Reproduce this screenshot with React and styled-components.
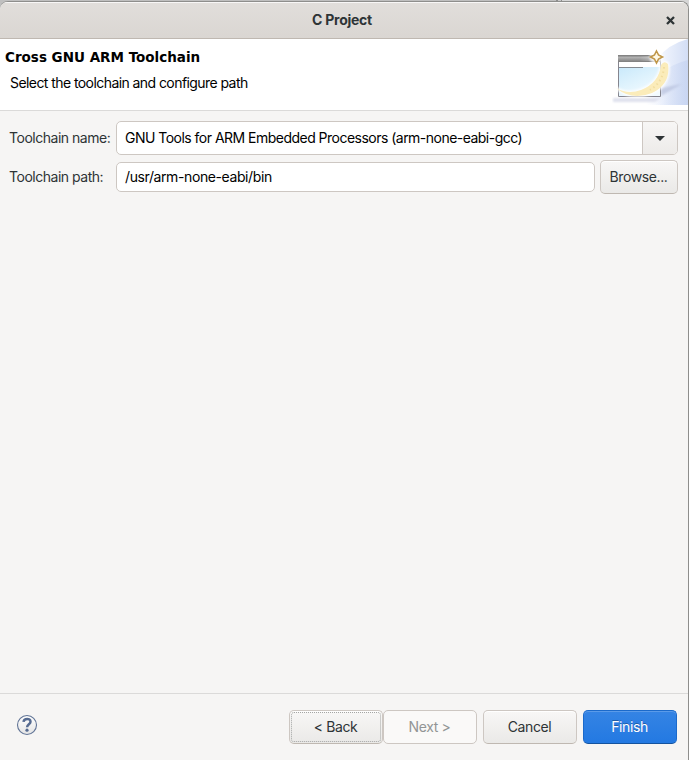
import React from "react";
import styled, { createGlobalStyle } from "styled-components";

const GlobalStyle = createGlobalStyle`
  * { box-sizing: border-box; }
  body { margin: 0; background: #c8c8c8; }
`;

const Desktop = styled.div`
  width: 689px;
  height: 760px;
  overflow: hidden;
  padding-top: 1px;
  background: linear-gradient(90deg, #bfbfbf 556px, #8d8d8d 556px 558px, #c9c9c9 558px 561px, #8d8d8d 561px 562px, #d6d6d6 562px);
  font-family: Inter, "Liberation Sans", sans-serif;
  font-size: 14px;
  line-height: 20px;
  letter-spacing: -0.48px;
  color: #2e3436;
`;

const Window = styled.div`
  height: 759px;
  display: flex;
  flex-direction: column;
  border-top: 1px solid #8e8e8c;
  border-right: 1px solid #8e8e8c;
  border-radius: 8px 8px 0 0;
  background: #f6f5f4;
  overflow: hidden;
`;

const TitleBar = styled.header`
  height: 37px;
  flex: none;
  display: grid;
  grid-template-columns: 36px 1fr 36px;
  align-items: center;
  justify-items: center;
  background: linear-gradient(#e1dedb, #dad6d2);
  border-bottom: 1px solid #bfb8b1;
  box-shadow: inset 0 1px #f8f7f7;
`;

const WindowTitle = styled.h1`
  grid-column: 2;
  margin: 0 0 0 -4px;
  font-size: 14px;
  font-weight: 700;
  letter-spacing: -0.25px;
`;

const CloseButton = styled.button`
  display: flex;
  padding: 0;
  border: 0;
  background: none;
`;

const Banner = styled.section`
  height: 72px;
  flex: none;
  display: flex;
  justify-content: space-between;
  background: #fff;
  border-bottom: 1px solid #dbdad9;
  color: #000;
`;

const BannerText = styled.div`
  padding: 8px 0 0 5px;
`;

const Heading = styled.h2`
  margin: 0 0 6px;
  font: 700 13.5px/20px "DejaVu Sans", sans-serif;
  letter-spacing: 0;
`;

const Description = styled.p`
  margin: 0;
  padding-left: 5px;
  letter-spacing: -0.57px;
`;

const Form = styled.main`
  flex: 1;
  padding: 10px 10px 0 9px;
`;

const FormRow = styled.div`
  display: grid;
  grid-template-columns: 107px 1fr auto;
  align-items: center;
  height: 34px;
  margin-bottom: 5px;
`;

const Label = styled.label`
  white-space: nowrap;
`;

const Combo = styled.div`
  grid-column: 2 / 4;
  display: flex;
  height: 34px;
  border: 1px solid #cdc7c2;
  border-radius: 5px;
  background: #fff;
  overflow: hidden;
`;

const ComboValue = styled.span`
  flex: 1;
  padding: 6px 8px;
  color: #000;
  letter-spacing: -0.52px;
`;

const ComboToggle = styled.span`
  width: 35px;
  display: flex;
  align-items: center;
  justify-content: center;
  border-left: 1px solid #cdc7c2;
  background: linear-gradient(#f7f6f5, #edebe9);
`;

const PathField = styled.div`
  height: 30px;
  margin: 0 5px 0 0;
  padding: 4px 8px;
  border: 1px solid #cdc7c2;
  border-radius: 5px;
  background: #fff;
  color: #000;
  letter-spacing: -0.4px;
`;

const variants = {
  normal: `
    color: #2e3436;
    background: linear-gradient(#f8f7f6, #eae9e7);
    border-color: #cdc7c2 #cdc7c2 #bfb8b1;
    box-shadow: inset 0 1px #fff;
  `,
  disabled: `
    color: #929595;
    background: #faf9f8;
    border-color: #cdc7c2;
  `,
  primary: `
    color: #fff;
    background: linear-gradient(#3584e4, #2379e2);
    border-color: #1b6acb #1b6acb #15539e;
    box-shadow: inset 0 1px #5b9be9;
    text-shadow: 0 -1px rgba(0, 0, 0, 0.28);
  `,
};

const Button = styled.button`
  position: relative;
  width: ${(p) => p.$width || 94}px;
  height: 34px;
  flex: none;
  padding: 0 1px 1px 0;
  border: 1px solid;
  border-radius: 5px;
  font: inherit;
  letter-spacing: -0.38px;
  ${(p) => variants[p.$variant || "normal"]}
`;

const FocusRing = styled.span`
  position: absolute;
  inset: 1px;
  border: 1px dotted #a3a5a4;
  border-radius: 3px;
`;

const Footer = styled.footer`
  height: 67px;
  flex: none;
  display: flex;
  align-items: flex-start;
  justify-content: space-between;
  padding: 16px 11px 0 16px;
  border-top: 1px solid #dbdad9;
`;

const HelpButton = styled.button`
  display: flex;
  margin-top: 4px;
  padding: 0;
  border: 0;
  background: none;
`;

const Actions = styled.div`
  display: flex;
  gap: 6px;
`;

const StepButtons = styled.div`
  display: flex;
`;

function WizardArt() {
  return (
    <svg width="76" height="66" viewBox="612 39 76 66">
      <defs>
        <linearGradient id="swoop" x1="0" x2="1" y1="0.5" y2="0.5">
          <stop offset="0" stopColor="#fff" />
          <stop offset="0.4" stopColor="#f0f4fd" />
          <stop offset="1" stopColor="#d3def5" />
        </linearGradient>
        <linearGradient id="beam" x1="0" x2="1" y1="0.5" y2="0.5">
          <stop offset="0" stopColor="#c8d6f3" stopOpacity="0" />
          <stop offset="1" stopColor="#c3d1f0" stopOpacity="0.65" />
        </linearGradient>
        <linearGradient id="sky" x1="0" x2="0.6" y1="0" y2="1">
          <stop offset="0" stopColor="#c9e9fb" />
          <stop offset="1" stopColor="#f2fbff" />
        </linearGradient>
        <linearGradient id="bar" x1="0" x2="0" y1="0" y2="1">
          <stop offset="0" stopColor="#777" />
          <stop offset="0.35" stopColor="#b0b0b0" />
          <stop offset="1" stopColor="#7d7d7d" />
        </linearGradient>
        <linearGradient id="barFade">
          <stop offset="0.5" stopColor="#fff" stopOpacity="0" />
          <stop offset="1" stopColor="#fff" stopOpacity="0.45" />
        </linearGradient>
        <filter id="soft" x="-30%" y="-30%" width="160%" height="160%">
          <feGaussianBlur stdDeviation="0.9" />
        </filter>
        <filter id="edge" x="-10%" y="-10%" width="120%" height="120%">
          <feGaussianBlur stdDeviation="0.45" />
        </filter>
      </defs>
      <path d="M688 39 Q668 44 656 60 L646 105 H688Z" fill="url(#swoop)" />
      <path d="M688 60 Q672 64 661 73 L655 105 H688Z" fill="url(#beam)" />
      <path d="M661 88 L682 84 L661 96Z" fill="#b4bdda" opacity="0.65" filter="url(#soft)" />
      <path d="M613 98 H661 L655 102 H613Z" fill="#d5d8e8" opacity="0.75" filter="url(#soft)" />
      <path d="M618.5 55.5 H660.5 V96.5 H618.5Z" fill="#fff" stroke="#85858e" />
      <path d="M618 55 H661 V62 H618Z" fill="url(#bar)" />
      <path d="M619 56 H660 V61 H619Z" fill="url(#barFade)" />
      <path d="M619 67 H660 V96 H619Z" fill="url(#sky)" />
      <path d="M619 67.5 H643" stroke="#858b91" strokeWidth="1" />
      <path d="M616 88 Q628 95 641 90 Q659 83 661 65 Q664 59 668 64 Q671 84 652 93 Q632 101 616 88Z" fill="#fff" stroke="#fff" strokeWidth="3" opacity="0.8" filter="url(#soft)" />
      <path d="M616 88 Q628 95 641 90 Q659 83 661 65 Q664 60 668 64 Q671 84 652 93 Q632 101 616 88Z" fill="#fbecba" filter="url(#edge)" />
      <path d="M664 67 Q663 82 650 90" fill="none" stroke="#f1dda0" strokeWidth="2" strokeDasharray="1.5 3" />
      <circle cx="656.5" cy="57" r="7" fill="#fff" opacity="0.8" filter="url(#soft)" />
      <path d="M656.5 51 L658.5 54.9 L662.6 57 L658.5 59.1 L656.5 63 L654.5 59.1 L650.4 57 L654.5 54.9Z" fill="#fff9e6" stroke="#bf9648" strokeWidth="1.5" />
    </svg>
  );
}

function CloseIcon() {
  return (
    <svg width="9" height="9" viewBox="0 0 9 9">
      <path d="M1 1 L8 8 M8 1 L1 8" stroke="#2e3436" strokeWidth="2.3" />
    </svg>
  );
}

function HelpIcon() {
  return (
    <svg width="22" height="22" viewBox="0 0 22 22">
      <defs>
        <linearGradient id="help" x1="0" x2="0" y1="0" y2="1">
          <stop offset="0" stopColor="#fff" />
          <stop offset="1" stopColor="#e4e4e4" />
        </linearGradient>
      </defs>
      <circle cx="11" cy="11" r="9.5" fill="url(#help)" stroke="#617496" strokeWidth="1.1" />
      <path d="M7.5 7.8 C8 4 14.5 4 14.5 7.7 C14.5 10.2 11.1 10.3 11.1 13.3" fill="none" stroke="#566b91" strokeWidth="2.5" />
      <circle cx="11" cy="16.2" r="1.6" fill="#566b91" />
    </svg>
  );
}

export default function App() {
  return (
    <Desktop>
      <GlobalStyle />
      <Window>
        <TitleBar>
          <WindowTitle>C Project</WindowTitle>
          <CloseButton aria-label="Close"><CloseIcon /></CloseButton>
        </TitleBar>
        <Banner>
          <BannerText>
            <Heading>Cross GNU ARM Toolchain</Heading>
            <Description>Select the toolchain and configure path</Description>
          </BannerText>
          <WizardArt />
        </Banner>
        <Form>
          <FormRow>
            <Label>Toolchain name:</Label>
            <Combo>
              <ComboValue>GNU Tools for ARM Embedded Processors (arm-none-eabi-gcc)</ComboValue>
              <ComboToggle>
                <svg width="10" height="5" viewBox="0 0 10 5"><path d="M0 0 H10 L5 5Z" fill="#2e3436" /></svg>
              </ComboToggle>
            </Combo>
          </FormRow>
          <FormRow>
            <Label>Toolchain path:</Label>
            <PathField>/usr/arm-none-eabi/bin</PathField>
            <Button $width={78}>Browse...</Button>
          </FormRow>
        </Form>
        <Footer>
          <HelpButton aria-label="Help"><HelpIcon /></HelpButton>
          <Actions>
            <StepButtons>
              <Button>&lt; Back<FocusRing /></Button>
              <Button $variant="disabled" disabled>Next &gt;</Button>
            </StepButtons>
            <Button>Cancel</Button>
            <Button $variant="primary">Finish</Button>
          </Actions>
        </Footer>
      </Window>
    </Desktop>
  );
}
